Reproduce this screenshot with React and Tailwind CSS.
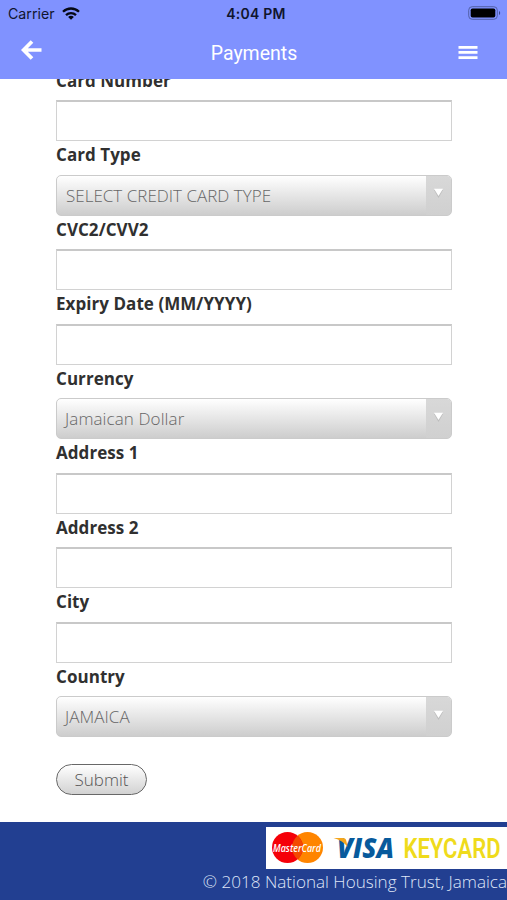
import React from "react";

const fields = [
    { label: "Card Number", type: "text" },
    { label: "Card Type", type: "select", value: "SELECT CREDIT CARD TYPE", spacing: "pl-[9px] tracking-[0.01px]" },
    { label: "CVC2/CVV2", type: "text" },
    { label: "Expiry Date (MM/YYYY)", type: "text" },
    { label: "Currency", type: "select", value: "Jamaican Dollar", spacing: "pl-2 tracking-[0.1px]" },
    { label: "Address 1", type: "text" },
    { label: "Address 2", type: "text" },
    { label: "City", type: "text" },
    { label: "Country", type: "select", value: "JAMAICA", spacing: "pl-2 tracking-[0.05px]" },
];

function StatusBar() {
    return (
        <div className="grid grid-cols-3 items-center h-[28px] pl-2 pr-[6px] text-[#10152e]">
            <div className="flex items-center gap-[7px]">
                <span className="text-[14.2px] leading-none">Carrier</span>
                <svg className="mb-[2px]" width="18" height="13" viewBox="0 0 18 13" fill="none" stroke="#050814" strokeWidth="2.3">
                    <path d="M1 4.8C5.5.4 12.5.4 17 4.8" />
                    <path d="M4 8.1c2.8-2.7 7.2-2.7 10 0" />
                    <path d="M9 12.8 6.1 9.9c1.6-1.5 4.2-1.5 5.8 0z" fill="#050814" stroke="none" />
                </svg>
            </div>
            <span className="pl-[3px] text-center text-[14px] leading-none font-semibold tracking-[0.25px]">4:04 PM</span>
            <svg className="justify-self-end mb-[2px]" width="33" height="14" viewBox="0 0 33 14">
                <rect x="0.7" y="0.7" width="28.6" height="12.6" rx="3.5" fill="none" stroke="#5260a8" />
                <rect x="2.7" y="2.5" width="24.6" height="9" rx="1.8" fill="#000" />
                <path d="M31 5c1.6.6 1.6 3.4 0 4z" fill="#3d4b8f" />
            </svg>
        </div>
    );
}

function Header() {
    return (
        <header className="shrink-0 h-[79px] bg-[#8092ff] font-['Inter',sans-serif]">
            <StatusBar />
            <div className="flex items-center justify-between h-[50px] pl-[21px] pr-[29px] text-white">
                <svg className="mb-[6px]" width="21" height="20" viewBox="0 0 21 20" fill="none" stroke="white" strokeWidth="3.7">
                    <path d="M11 1.5 2.6 10l8.4 8.5M3 10h17.5" />
                </svg>
                <h1 className="pl-2 pt-[2px] font-['Roboto',sans-serif] text-[19.5px] leading-none">Payments</h1>
                <svg width="20" height="14" viewBox="0 0 20 14" fill="white">
                    <path d="M.5 0h19v2.7H.5zM.5 5.1h19v2.7H.5zM.5 10.2h19v2.7H.5z" />
                </svg>
            </div>
        </header>
    );
}

function SelectBox({ value, spacing }) {
    return (
        <div className="flex h-[41.25px] rounded-[5px] border border-[#cbcbcb] bg-linear-to-b from-white to-[#cdcdcd] overflow-hidden">
            <span className={`flex-1 leading-[40px] text-[17px] font-light text-[#666] ${spacing}`}>{value}</span>
            <span className="flex justify-center w-[25px] pt-[12.5px] bg-linear-to-b from-[#d8d8d8] to-[#d0d0d0]">
                <svg width="11" height="10" viewBox="0 0 11 10">
                    <path d="M1 2h9L5.5 10z" fill="#bdbdbd" />
                    <path d="M1 .7h9L5.5 8z" fill="white" />
                </svg>
            </span>
        </div>
    );
}

function Field({ field }) {
    return (
        <div>
            <label className="block h-[33.25px] text-[17px] leading-[28.5px] tracking-[0.05px] font-bold text-[#303030]">{field.label}</label>
            {field.type === "select" ? (
                <SelectBox value={field.value} spacing={field.spacing} />
            ) : (
                <div className="h-[41.25px] border border-t-2 border-[#d2d2d2] border-t-[#c8c8c8] bg-white" />
            )}
        </div>
    );
}

function CardLogos() {
    return (
        <svg width="241" height="42" viewBox="0 0 241 42">
            <rect width="241" height="42" fill="white" />
            <circle cx="41.5" cy="20.5" r="15.5" fill="#ff8500" />
            <circle cx="21.5" cy="20.5" r="15.5" fill="#f50008" />
            <path d="M31.5 8.7a15.5 15.5 0 0 1 0 23.6a15.5 15.5 0 0 1 0-23.6z" fill="#f34a00" />
            <text x="7" y="24.5" textLength="48" lengthAdjust="spacingAndGlyphs" fontFamily="Open Sans, sans-serif" fontSize="10.5" fontWeight="600" fontStyle="italic" fill="white">MasterCard</text>
            <text x="71" y="31" textLength="57" lengthAdjust="spacingAndGlyphs" fontFamily="Open Sans, sans-serif" fontSize="27.5" fontWeight="800" fontStyle="italic" fill="#075a9c">VISA</text>
            <path d="M67.5 11h9.5c2 0 2.9.9 3.3 2.8l1.2 6C78.5 15.5 74 13 67.5 11z" fill="#f4a51c" />
            <text x="137.5" y="31" textLength="97" lengthAdjust="spacingAndGlyphs" fontFamily="Roboto, sans-serif" fontSize="28" fontWeight="600" fill="#efdb1c">KEYCARD</text>
        </svg>
    );
}

function Footer() {
    return (
        <footer className="shrink-0 flex flex-col items-end h-[78px] pt-[5px] bg-[#223f91]">
            <CardLogos />
            <p className="text-[17.1px] leading-[26px] font-light text-[#dfe5f8] whitespace-nowrap">© 2018 National Housing Trust, Jamaica</p>
        </footer>
    );
}

function App() {
    return (
        <div className="flex flex-col w-[507px] h-[900px] overflow-hidden bg-white font-['Open_Sans',sans-serif]">
            <Header />
            <main className="flex-1 min-h-0 overflow-hidden">
                {/* form is scrolled partly under the header */}
                <form className="-mt-[12.25px] pl-14 pr-[55px]">
                    {fields.map((field) => (
                        <Field key={field.label} field={field} />
                    ))}
                    <button
                        type="button"
                        className="block mt-[26.5px] w-[91px] h-[31px] rounded-full border-[1.5px] border-[#686868] bg-linear-to-b from-white to-[#d2d2d2] text-[17px] leading-[27px] font-light text-[#555]"
                    >
                        Submit
                    </button>
                </form>
            </main>
            <Footer />
        </div>
    );
}

export default App;
